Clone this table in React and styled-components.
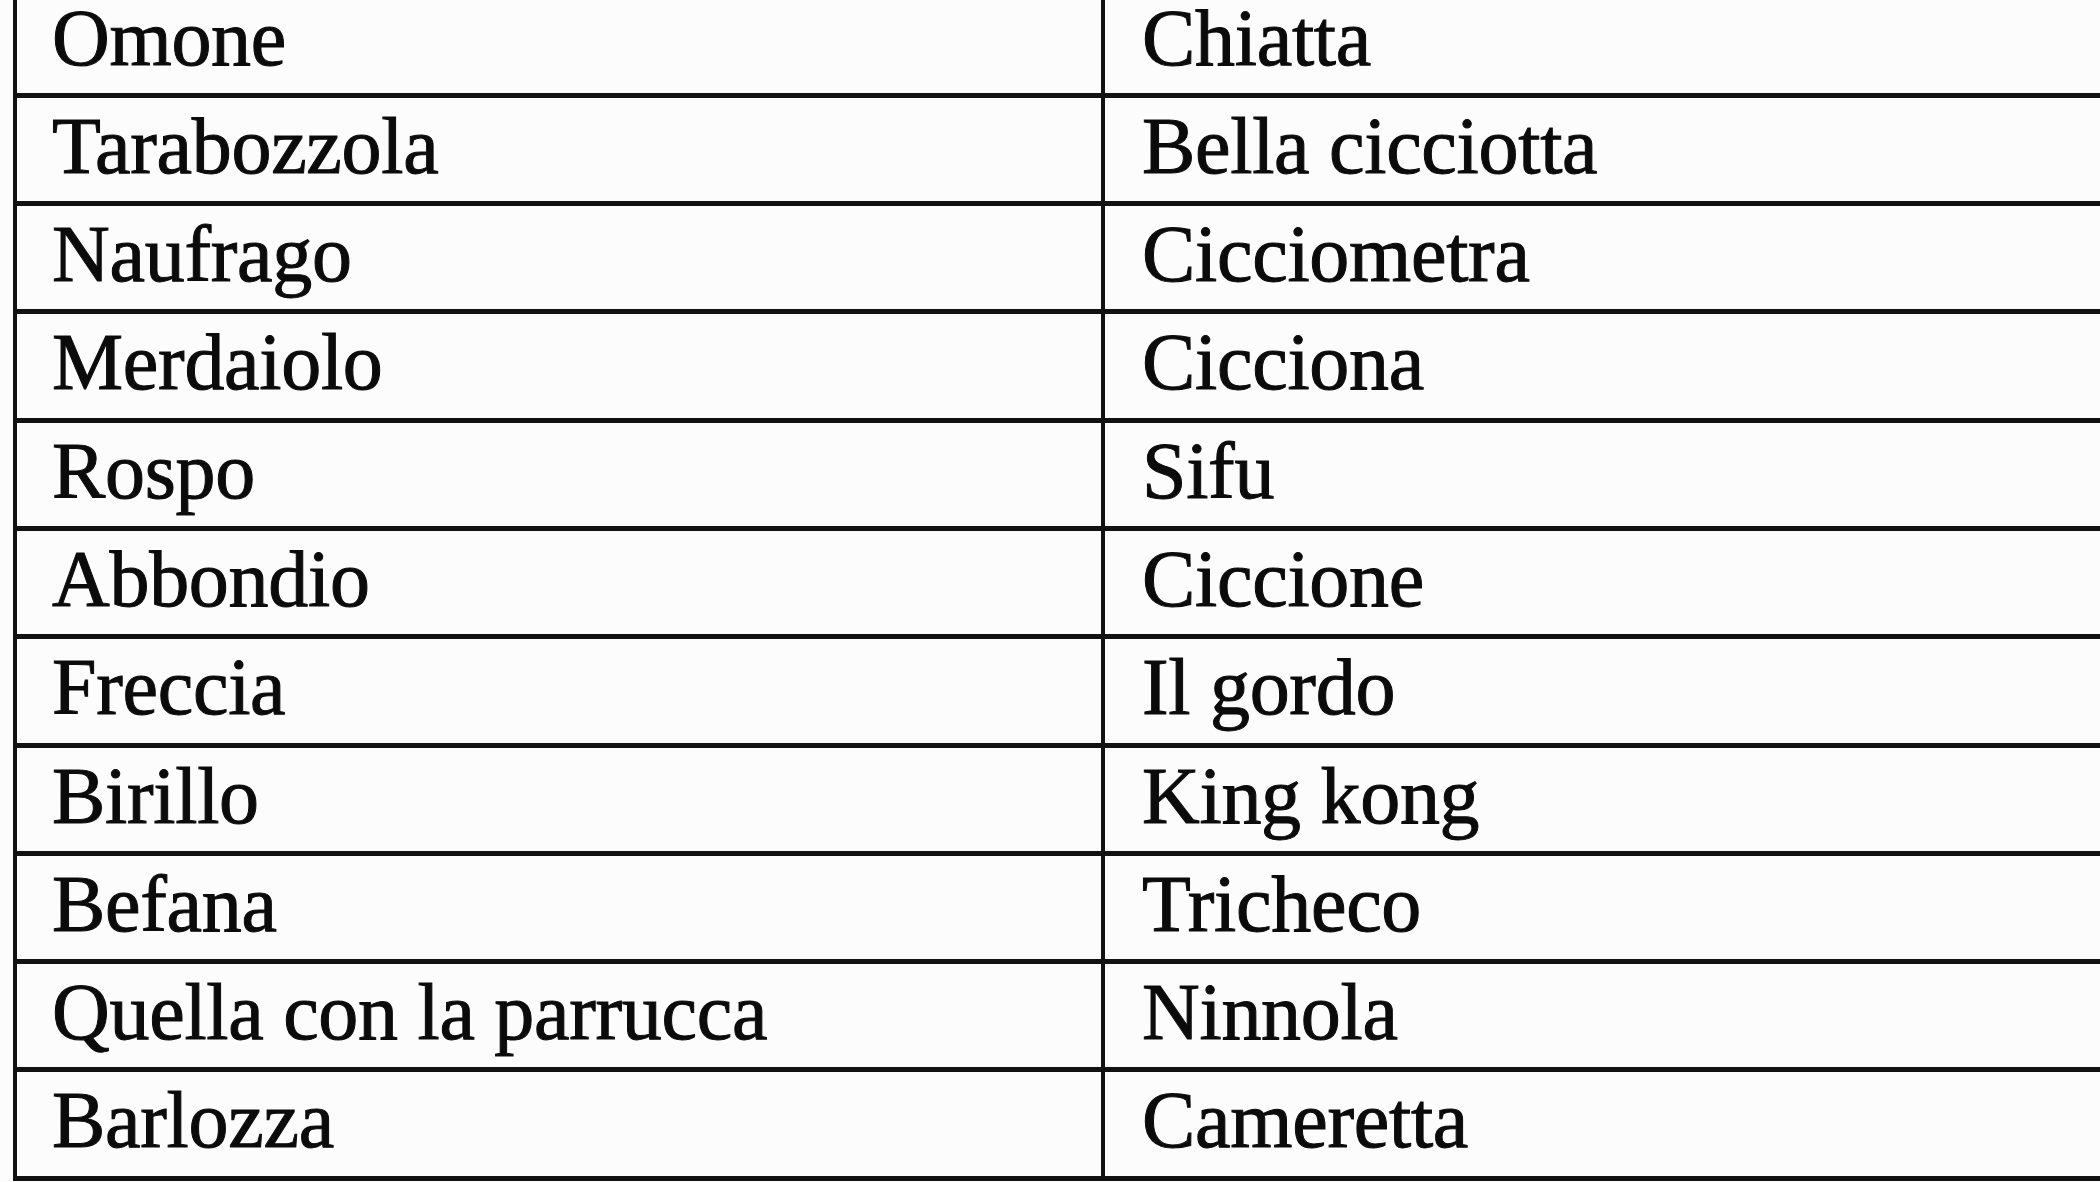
import React from 'react';
import styled, { createGlobalStyle } from 'styled-components';

const GlobalStyle = createGlobalStyle`
  html, body {
    margin: 0;
    padding: 0;
    background: #fcfcfc;
    overflow: hidden;
  }
  body {
    width: 2100px;
    height: 1182px;
  }
`;

const rows = [
  ['Omone', 'Chiatta'],
  ['Tarabozzola', 'Bella cicciotta'],
  ['Naufrago', 'Cicciometra'],
  ['Merdaiolo', 'Cicciona'],
  ['Rospo', 'Sifu'],
  ['Abbondio', 'Ciccione'],
  ['Freccia', 'Il gordo'],
  ['Birillo', 'King kong'],
  ['Befana', 'Tricheco'],
  ['Quella con la parrucca', 'Ninnola'],
  ['Barlozza', 'Cameretta'],
];

const ink = '#121212';

// the scanned sheet runs off the top and right edge of the picture
const Sheet = styled.div`
  margin: -15.5px 0 0 13px;
  width: 2150px;
  border-left: 4px solid ${ink};
  border-bottom: 5px solid ${ink};
  font-family: "Liberation Serif", "Times New Roman", serif;
  color: #0b0b0b;
`;

const Row = styled.div`
  display: grid;
  grid-template-columns: 1084px 1fr;
  height: 108.3px;
  box-sizing: border-box;
  border-top: 5px solid ${ink};
`;

const Cell = styled.div`
  box-sizing: border-box;
  padding: 8px 0 0 ${(p) => (p.$right ? '37px' : '35px')};
  border-left: ${(p) => (p.$right ? `4px solid ${ink}` : 'none')};
  font-size: 80px;
  line-height: 1;
  letter-spacing: -0.3px;
  white-space: nowrap;
  -webkit-text-stroke: 1px #0b0b0b;
`;

export default function App() {
  return (
    <>
      <GlobalStyle />
      <Sheet>
        {rows.map(([left, right]) => (
          <Row key={left}>
            <Cell>{left}</Cell>
            <Cell $right>{right}</Cell>
          </Row>
        ))}
      </Sheet>
    </>
  );
}
